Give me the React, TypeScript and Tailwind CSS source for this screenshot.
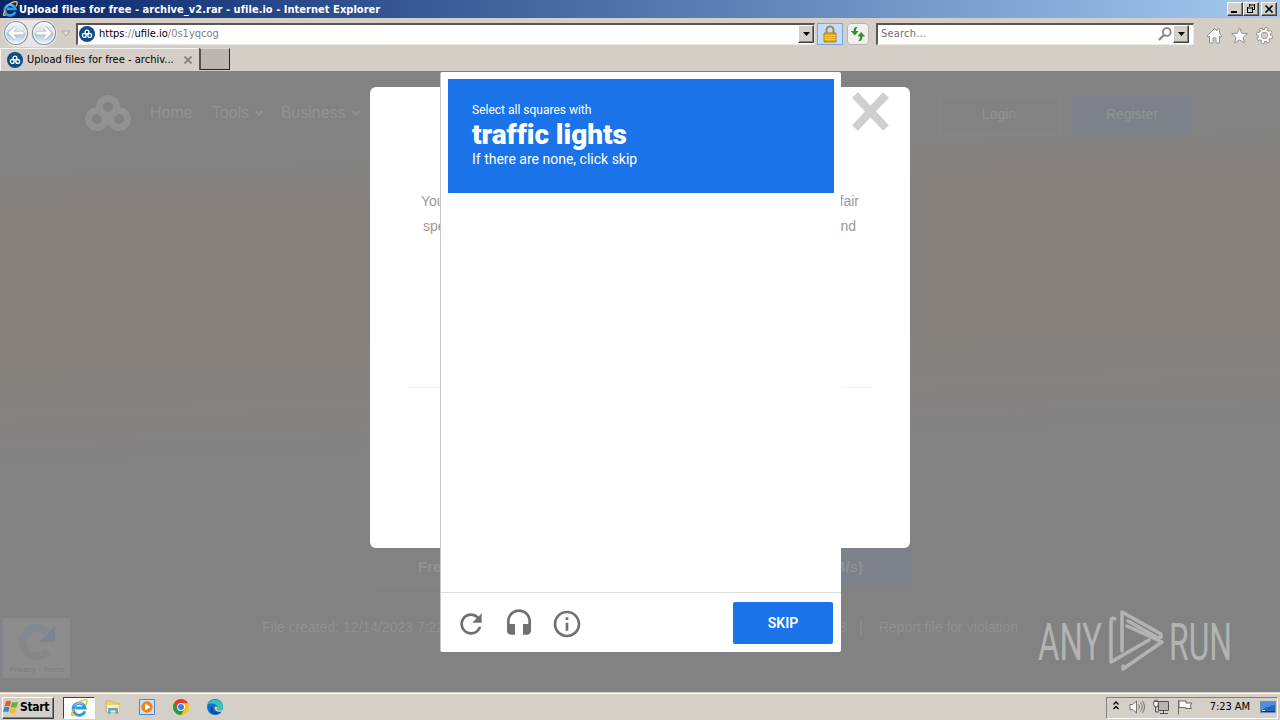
import { ReactNode } from "react";
import clsx from "clsx";

const SiteMark = ({ className }: { className: string }) => (
  <svg className={className} viewBox="0 0 46 36" fill="none" stroke="currentColor">
    <g strokeWidth="7">
      <circle cx="23" cy="12" r="8.5" />
      <circle cx="12" cy="24" r="8.5" />
      <circle cx="34" cy="24" r="8.5" />
    </g>
    <path d="M17 18l12 12" strokeWidth="6" />
  </svg>
);

const Favicon = () => (
  <div className="w-4 h-4 shrink-0 rounded-full bg-[#0c4c8a] flex items-center justify-center">
    <svg className="w-3 h-3" viewBox="0 0 12 12" fill="none" stroke="#fff" strokeWidth="1.3">
      <circle cx="6" cy="4" r="1.9" />
      <circle cx="3.3" cy="7.4" r="1.9" />
      <circle cx="8.7" cy="7.4" r="1.9" />
    </svg>
  </div>
);

const ExplorerIcon = ({ className }: { className: string }) => (
  <svg className={className} viewBox="0 0 18 18" fill="none">
    <path d="M14.8 12.2A6 6 0 1 1 15 8.9H5.4" stroke="#2f9be0" strokeWidth="3" />
    <path d="M4.5 7.2a5.3 5.3 0 0 1 8.6-1.6" stroke="#9bdcf8" strokeWidth="1" />
    <path
      d="M3.6 10.5C.6 15.5.8 17.5 4.8 15.3M8 3.7C12 .8 16.5-.4 17 2c.2 1-.3 2.4-1.3 4"
      stroke="#f2bd2e"
      strokeWidth="1.5"
    />
  </svg>
);

const DownArrow = ({ className }: { className: string }) => (
  <svg className={className} viewBox="0 0 7 4" fill="currentColor">
    <path d="M0 0h7L3.5 4z" />
  </svg>
);

const NavCircle = ({ forward }: { forward?: boolean }) => {
  const gradientId = forward ? "fwd" : "back";
  const arrow = forward
    ? "M5.5 13h13M13.5 7.5l5.5 5.5-5.5 5.5"
    : "M20.5 13h-13M12.5 7.5L7 13l5.5 5.5";

  return (
    <svg className="w-[26px] h-[26px]" viewBox="0 0 26 26" fill="none">
      <defs>
        <linearGradient id={gradientId} x1="0" y1="0" x2="0" y2="1">
          <stop offset="0" stopColor="#f7f9fb" />
          <stop offset=".45" stopColor="#d8e1ea" />
          <stop offset=".55" stopColor="#b4c6d7" />
          <stop offset="1" stopColor="#e8f8fc" />
        </linearGradient>
      </defs>
      <circle cx="13" cy="13" r="11.5" fill={`url(#${gradientId})`} stroke="#8794a3" strokeWidth="1.2" />
      <circle cx="13" cy="13" r="10.3" stroke="#fff" strokeWidth="1" />
      <path d={arrow} stroke="#9fadbb" strokeWidth="4.2" />
      <path d={arrow} stroke="#fff" strokeWidth="2.8" />
    </svg>
  );
};

const DropButton = () => (
  <div className="w-4 h-[18px] bg-[#d4d0c8] border border-t-white border-l-white border-r-[#404040] border-b-[#404040] shadow-[inset_-1px_-1px_0_#808080] flex items-center justify-center">
    <DownArrow className="w-[7px] h-1 text-black" />
  </div>
);

const WindowButton = ({ children }: { children: ReactNode }) => (
  <div className="w-4 h-[14px] bg-[#d4d0c8] border border-t-white border-l-white border-r-[#404040] border-b-[#404040] shadow-[inset_-1px_-1px_0_#808080]">
    <svg className="w-[14px] h-3" viewBox="0 0 14 12" fill="none" stroke="#000">
      {children}
    </svg>
  </div>
);

function TitleBar() {
  return (
    <div className="h-[18px] shrink-0 flex items-center bg-linear-to-r from-[#0a246a] to-[#a6caf0] pl-0.5 pr-[3px]">
      <ExplorerIcon className="w-4 h-4" />
      <div className="ml-px flex-1 text-white text-[11px] leading-none font-bold tracking-[0.035px] whitespace-nowrap">
        Upload files for free - archive_v2.rar - ufile.io - Internet Explorer
      </div>
      <div className="flex">
        <WindowButton>
          <path d="M3 9h6" strokeWidth="2" />
        </WindowButton>
        <WindowButton>
          <path d="M5 2h6M5.5 1v3M10.5 1v6M8.5 6.5h2M3 5h6M3.5 4v6M8.5 4v6M3 9.5h6" />
        </WindowButton>
        <div className="w-0.5" />
        <WindowButton>
          <path d="M3.5 2.5l7 7M10.5 2.5l-7 7" strokeWidth="1.7" />
        </WindowButton>
      </div>
    </div>
  );
}

function AddressBar() {
  return (
    <div className="h-[29px] shrink-0 flex items-center pl-[3px] pt-0.5">
      <div className="flex gap-0.5 h-[27px] bg-[#e8e6e5] rounded-full">
        <NavCircle />
        <NavCircle forward />
      </div>
      <svg className="ml-1 w-[10px] h-[7px]" viewBox="0 0 10 7">
        <path d="M1 1h8L5 6z" fill="#e4e0dc" stroke="#aaa5a0" />
      </svg>
      <div className="ml-[5px] w-[739px] h-[22px] bg-white border-t-2 border-l-2 border-b border-r border-t-[#5b5553] border-l-[#5b5553] border-[#ebe9e6] flex items-center pl-px">
        <Favicon />
        <div className="ml-1 flex-1 text-[11px] text-[#808080]">
          <span className="text-black">https</span>://<span className="text-black">ufile.io</span>/0s1yqcog
        </div>
        <DropButton />
      </div>
      <div className="ml-0.5 w-[26px] h-[22px] bg-[#c4dcf7] border border-[#79a7df] flex items-center justify-center">
        <svg className="w-4 h-[18px]" viewBox="0 0 16 18">
          <path d="M4.5 9V5a3.5 3.5 0 0 1 7 0v4" fill="none" stroke="#a08a55" strokeWidth="2" />
          <path d="M2 8h12v9H2z" fill="#e5a91c" stroke="#b5810f" />
          <path d="M2.5 10.5h11M2.5 12.5h11M2.5 14.5h11" stroke="#f6cf57" />
        </svg>
      </div>
      <div className="ml-1 w-[22px] h-[22px] bg-[#f0efed] border border-[#b9b5b0] rounded-sm flex items-center justify-center">
        <svg className="w-4 h-4" viewBox="0 0 16 16" fill="#299129">
          <path d="M7.5 1H5.5Q3.5 2 3.5 5H.8L4.8 9.5 8.5 5H5.8q0-2.500 1.700-4z" />
          <path d="M8.500 15h2Q12.500 14 12.500 10.500h2.700L11.200 6 7.500 10.500h2.700q0 2.500-1.700 4.500z" />
        </svg>
      </div>
      <div className="ml-[7px] w-[318px] h-[22px] bg-white border-t-2 border-l-2 border-b border-r border-t-[#5b5553] border-l-[#5b5553] border-[#ebe9e6] flex items-center pl-[3px] pr-1">
        <div className="flex-1 text-[11px] text-[#707070] tracking-[0.200px]">Search...</div>
        <svg className="w-[14px] h-[14px] mr-px" viewBox="0 0 14 14" fill="none" stroke="#88847f">
          <circle cx="8.8" cy="5" r="3.9" strokeWidth="1.8" />
          <path d="M6 8l-5 5" strokeWidth="2.2" />
        </svg>
        <DropButton />
      </div>
      <div className="ml-3 mt-[3px] flex gap-2">
        <svg className="w-[17px] h-[17px]" viewBox="0 0 17 17" fill="#fff" stroke="#96918d">
          <path d="M1 9l7.500-7.500L11 4V2h2.500v4.500L16 9l-1 1.200-1.500-1.200v7H10v-5H7v5H3.500V9L2 10.200z" />
        </svg>
        <svg className="w-[17px] h-[17px]" viewBox="0 0 17 17" fill="#fff" stroke="#96918d">
          <path d="M8.500.8l2.200 5.400 5.600.4-4.300 3.700 1.400 5.700-4.900-3.100L3.600 16 5 10.300.7 6.600l5.600-.4z" />
        </svg>
        <svg className="w-[17px] h-[17px]" viewBox="0 0 17 17" fill="none">
          <circle cx="8.5" cy="8.5" r="6.6" stroke="#8f8b87" strokeWidth="3.6" strokeDasharray="3.2 1.984" />
          <circle cx="8.5" cy="8.5" r="4.7" stroke="#8f8b87" strokeWidth="4" />
          <circle cx="8.5" cy="8.5" r="6.6" stroke="#fff" strokeWidth="2" strokeDasharray="2 3.184" strokeDashoffset="-.6" />
          <circle cx="8.5" cy="8.5" r="4.6" stroke="#fff" strokeWidth="2.4" />
        </svg>
      </div>
    </div>
  );
}

function TabStrip() {
  return (
    <div className="h-6 shrink-0 flex items-start">
      <div className="w-[198px] h-6 mt-px pl-1.5 pr-1.5 pb-px flex items-center border-t border-l border-[#f3f1ee]">
        <Favicon />
        <div className="ml-1 flex-1 text-[11px] tracking-[0.020px] whitespace-nowrap">
          Upload files for free - archiv...
        </div>
        <svg className="w-2 h-2" viewBox="0 0 8 8" stroke="#85807c" strokeWidth="1.8">
          <path d="M.5.5l7 7M7.5.5l-7 7" />
        </svg>
      </div>
      <div className="ml-px mt-px w-[31px] h-[22px] bg-[#bdb5b0] border-t border-l-2 border-b border-r border-t-[#d8d4d0] border-l-[#55504d] border-[#262423]" />
    </div>
  );
}

const MenuLink = ({ label, caret }: { label: string; caret?: boolean }) => (
  <div className="flex items-center gap-1.5">
    <span>{label}</span>
    {caret && (
      <svg className="w-2 h-1.5 shrink-0" viewBox="0 0 8 6" fill="none" stroke="currentColor" strokeWidth="2">
        <path d="M.5 1L4 4.5 7.5 1" />
      </svg>
    )}
  </div>
);

function DownloadPage() {
  return (
    <div className="h-full flex flex-col bg-[#828282] bg-[linear-gradient(178deg,transparent_15%,#85807c_21%,#85807c_43%,#848180_52%,transparent_60%)] text-[#929292]">
      <div className="h-[85px] pl-[85px] pr-[88px] flex items-start">
        <SiteMark className="w-[46px] h-9 mt-6 text-[#929292]" />
        <div className="ml-[19px] mt-[31px] flex gap-[19px] text-base leading-[22px]">
          <MenuLink label="Home" />
          <div className="w-[50px]">
            <MenuLink label="Tools" caret />
          </div>
          <MenuLink label="Business" caret />
        </div>
        <div className="flex-1" />
        <div className="mt-6 w-[126px] h-[41px] border-[5px] border-[#848484] flex items-center justify-center pr-0.5 pb-1 text-sm">
          Login
        </div>
        <div className="mt-6 ml-[9px] w-[120px] h-[39px] bg-[#7d818a] flex items-center justify-center pb-0.5 text-sm">
          Register
        </div>
      </div>
      <div className="mt-[392px] ml-[370px] w-[542px] h-[38px] flex text-[15px] font-bold">
        <div className="flex-1 border border-[#858585] pl-[47px] leading-[35px]">Free Download</div>
        <div className="w-[271px] bg-[#7d818a] pr-[49px] text-right leading-[37px]">Premium Download (MB/s)</div>
      </div>
      <div className="mt-8 flex justify-between px-[262px] text-sm leading-[18px] text-[#919191]">
        <span>File created: 12/14/2023 7:22</span>
        <div className="flex">
          <span>MB</span>
          <span className="ml-3">|</span>
          <span className="ml-4">Report file for violation</span>
        </div>
      </div>
    </div>
  );
}

const RecaptchaBadge = () => (
  <div className="absolute left-0.5 top-[547px] w-[68px] h-[60px] rounded-xs bg-[#8d8d8d] border-l-2 border-[#858a94] flex flex-col items-center pt-1">
    <svg className="w-10 h-10" viewBox="0 0 40 40" fill="none" strokeWidth="8">
      <path d="M6 20a14 14 0 0 1 24-10" stroke="#828993" />
      <path d="M38 4v16H22z" fill="#7d848f" />
      <path d="M6 20a14 14 0 0 0 25 9" stroke="#878787" />
    </svg>
    <div className="text-[8px] leading-[10px] mt-[3px] text-[#7d7d7d] whitespace-nowrap">Privacy - Terms</div>
  </div>
);

const SpeedModal = () => (
  <div className="absolute left-[370px] top-4 w-[540px] h-[461px] rounded-md bg-white px-[38px]">
    <svg className="absolute left-[482px] top-[5px] w-[37px] h-[39px]" viewBox="0 0 37 39" stroke="#cfcfcf" strokeWidth="8">
      <path d="M3 3l31 33M34 3L3 36" />
    </svg>
    <div className="pt-[102px] px-[13px] text-sm leading-[25px] text-[#999]">
      <div className="flex justify-between">
        <span>Your download is</span>
        <span>fair</span>
      </div>
      <div className="flex justify-between pl-0.5 pr-[3px]">
        <span>speed</span>
        <span>and</span>
      </div>
    </div>
    <div className="mt-[148px] h-px bg-[#f2f2f2]" />
  </div>
);

const FooterIcon = ({ d }: { d: string }) => (
  <svg className="w-8 h-8" viewBox="0 0 24 24" fill="#707070">
    <path d={d} />
  </svg>
);

function Challenge() {
  return (
    <div className="absolute left-[440px] top-px w-[401px] h-[580px] flex flex-col bg-white border-l border-[#c8c8c8] rounded-xs font-[Roboto,sans-serif]">
      <div className="ml-[7px] mt-[7px] w-[386px] h-[114px] bg-[#1a73e8] text-white pl-6 pt-[23px]">
        <div className="text-xs leading-4">Select all squares with</div>
        <div className="pt-px text-[28px] leading-[31px] font-black tracking-[-0.050px]">traffic lights</div>
        <div className="text-sm leading-[18px]">If there are none, click skip</div>
      </div>
      <div className="flex-1" />
      <div className="h-[60px] border-t border-[#dfdfdf] flex items-center pl-3.5 pr-2">
        <div className="flex gap-4 mt-0.5">
          <FooterIcon d="M17.650 6.350A7.958 7.958 0 0 0 12 4c-4.420 0-7.990 3.580-7.990 8s3.570 8 7.990 8c3.730 0 6.840-2.550 7.730-6h-2.080A5.990 5.990 0 0 1 12 18c-3.310 0-6-2.690-6-6s2.690-6 6-6c1.660 0 3.140.690 4.220 1.780L13 11h7V4l-2.350 2.350z" />
          <FooterIcon d="M12 1c-4.970 0-9 4.030-9 9v7c0 1.660 1.340 3 3 3h3v-8H5v-2c0-3.870 3.130-7 7-7s7 3.130 7 7v2h-4v8h3c1.660 0 3-1.340 3-3v-7c0-4.970-4.030-9-9-9z" />
          <FooterIcon d="M11 17h2v-6h-2v6zm1-15C6.480 2 2 6.480 2 12s4.480 10 10 10 10-4.480 10-10S17.520 2 12 2zm0 18c-4.410 0-8-3.590-8-8s3.590-8 8-8 8 3.590 8 8-3.590 8-8 8zM11 9h2V7h-2v2z" />
        </div>
        <div className="flex-1" />
        <div className="w-[100px] h-[42px] mt-px rounded-xs bg-[#1a73e8] text-white text-sm font-semibold flex items-center justify-center">
          SKIP
        </div>
      </div>
    </div>
  );
}

const Watermark = () => (
  <svg
    className="absolute left-[1038px] top-[537px] w-[195px] h-[66px] overflow-visible text-[#c0c0c0] opacity-80"
    viewBox="0 0 195 66"
  >
    <g fill="currentColor" fontFamily="Roboto, sans-serif" fontSize="52">
      <text x="0" y="52" textLength="64" lengthAdjust="spacingAndGlyphs">ANY</text>
      <text x="131" y="52" textLength="63" lengthAdjust="spacingAndGlyphs">RUN</text>
    </g>
    <g fill="none" stroke="currentColor" strokeWidth="3.5" strokeLinejoin="round" strokeLinecap="round">
      <path d="M84 43V4l39 22v3l-3 1-30-17" />
      <path d="M77 11q-4-2-4 2v41l38-22" />
      <path d="M89 18l35 16-39 27v-3" />
    </g>
  </svg>
);

const TaskButton = ({ active, children }: { active?: boolean; children: ReactNode }) => (
  <div
    className={clsx(
      "h-[22px] flex items-center justify-center border",
      active
        ? "w-8 mr-px bg-white border-t-[#404040] border-l-[#404040] border-r-white border-b-white"
        : "w-[34px] border-transparent pb-0.5"
    )}
  >
    {children}
  </div>
);

function Taskbar() {
  return (
    <div className="h-7 shrink-0 border-t border-[#d4d0c8] bg-[#d4d0c8] shadow-[inset_0_1px_0_#fff] flex items-center px-0.5 pt-0.5">
      <div className="w-[52px] h-[22px] border border-t-white border-l-white border-r-[#404040] border-b-[#404040] shadow-[inset_-1px_-1px_0_#808080] flex items-center">
        <svg className="w-4 h-4 -mt-0.5" viewBox="0 0 16 16">
          <path d="M3 2.5Q5.5.8 8 2.5L6.8 7.5Q4.3 6 1.7 7.3z" fill="#e4572a" />
          <path d="M9 3q3 1.300 6-.2L13.600 8q-3 1.200-5.800 0z" fill="#68ad37" />
          <path d="M1.400 8.300Q4 7 6.500 8.500L5.300 13Q3 11.800.2 13z" fill="#3584ce" />
          <path d="M7.500 9q3 1.300 5.800 0L12 14q-3 1.300-5.700-.5z" fill="#f4bd24" />
        </svg>
        <span className="ml-px -mt-0.5 text-xs font-bold tracking-[-0.300px]">Start</span>
      </div>
      <div className="ml-[9px] flex">
        <TaskButton active>
          <ExplorerIcon className="w-[18px] h-[18px]" />
        </TaskButton>
        <TaskButton>
          <svg className="w-4 h-4" viewBox="0 0 16 16">
            <path d="M1 2h6l1 2h6v9H1z" fill="#ecd273" stroke="#c9a94c" strokeWidth=".7" />
            <path d="M2 6h12v7H2z" fill="#f9edb0" />
            <path d="M3 15V9h10v6h-2.500v-3.500h-5V15z" fill="#58a9d6" />
          </svg>
        </TaskButton>
        <TaskButton>
          <svg className="w-4 h-4" viewBox="0 0 16 16">
            <path d="M.5.5h15v15H.5z" fill="#cae2f5" stroke="#4a8ac9" />
            <circle cx="8" cy="8" r="5.7" fill="#f08316" />
            <path d="M6 4.500l5.500 3.500L6 11.500z" fill="#fff" />
          </svg>
        </TaskButton>
        <TaskButton>
          <svg className="w-4 h-4" viewBox="0 0 16 16">
            <circle cx="8" cy="8" r="8" fill="#fbc116" />
            <path d="M1.070 4A8 8 0 0 0 8 16l3.500-6L8 8z" fill="#269a4b" />
            <path d="M8 4.200h7L14.900 4A8 8 0 0 0 1.070 4L4.700 10z" fill="#e33b2e" />
            <circle cx="8" cy="8" r="3.900" fill="#fff" />
            <circle cx="8" cy="8" r="3" fill="#3b7ded" />
          </svg>
        </TaskButton>
        <TaskButton>
          <svg className="w-4 h-4" viewBox="0 0 16 16">
            <circle cx="8" cy="8" r="8" fill="#1371c9" />
            <path d="M.5 6A8 8 0 0 1 16 8c0 3-3 4-5.500 3-1.500-.7 0-1.500 0-3C10.500 5 4 3 .5 6z" fill="#3ac5b0" />
            <path d="M6 8c-1 3 1 6.500 8 4.800C11 17 4 16 3 11c-.3-2 1-4 3-3z" fill="#0c4f9c" />
            <path d="M7.500 8.500Q8 7 10.500 8c0 1.500-1.500 2.300 0 3 2 .8 4 .3 5-1l-1 2.500c-4 1-7-1-7-4z" fill="#d4d0c8" />
          </svg>
        </TaskButton>
      </div>
      <div className="flex-1" />
      <div className="w-[172px] h-[22px] border border-t-[#808080] border-l-[#808080] border-r-white border-b-white flex items-center pl-1.5 pb-px">
        <svg className="-mt-1 w-[6px] h-[9px]" viewBox="0 0 6 9" fill="none" stroke="#000" strokeWidth="1.3">
          <path d="M.5 3.500L3 1l2.500 2.500M.5 8L3 5.500 5.500 8" />
        </svg>
        <svg className="ml-[10px] w-4 h-4" viewBox="0 0 16 16" fill="#fff" stroke="#77736f">
          <path d="M1 5.500h2.500L7.500 2v12l-4-3.500H1z" />
          <path d="M9.500 5.500q2 2.500 0 5M11.500 3.500q3.500 4.500 0 9M13.500 2q4 6 0 12" fill="none" />
        </svg>
        <svg className="ml-2 w-4 h-4" viewBox="0 0 16 16" fill="#fff" stroke="#55514e">
          <path d="M5.500 2.500h10v9h-10z" fill="#b8b5b1" />
          <path d="M10.500 12v2M7 14.500h8M2.500 8v5H6" fill="none" />
          <path d="M.8 2.500h4.400V6L4 8H2L.8 6zM2 .5v2M4 .5v2" />
        </svg>
        <svg className="ml-2 w-4 h-4" viewBox="0 0 16 16" fill="#fff" stroke="#6d6966">
          <path d="M1.500 1v14.500M2 2h7v2h6l-2 3 1.500 2.500H8.500V8.500H2z" />
        </svg>
        <span className="flex-1 text-right text-[11px] tracking-[-0.050px] whitespace-nowrap">7:23 AM</span>
        <svg className="ml-[10px] mr-px w-4 h-[14px]" viewBox="0 0 16 14">
          <path d="M.5 1.500h15v11H.5z" fill="#2367c0" stroke="#6b8db8" />
          <path d="M1 2h14v3Q8 6 1 10z" fill="#4c91df" />
          <path d="M1 11.500h14" stroke="#14396e" />
          <path d="M2 10.500h3" stroke="#fff" />
        </svg>
      </div>
    </div>
  );
}

export default function App() {
  return (
    <div className="w-[1280px] h-[720px] flex flex-col overflow-hidden bg-[#d5cec7] text-black font-['DejaVu_Sans_Condensed','DejaVu_Sans',sans-serif] [font-stretch:condensed]">
      <TitleBar />
      <AddressBar />
      <TabStrip />
      <div className="relative flex-1 min-h-0 overflow-hidden font-['Liberation_Sans',Arial,sans-serif] [font-stretch:normal]">
        <DownloadPage />
        <RecaptchaBadge />
        <SpeedModal />
        <Challenge />
        <Watermark />
      </div>
      <Taskbar />
    </div>
  );
}
